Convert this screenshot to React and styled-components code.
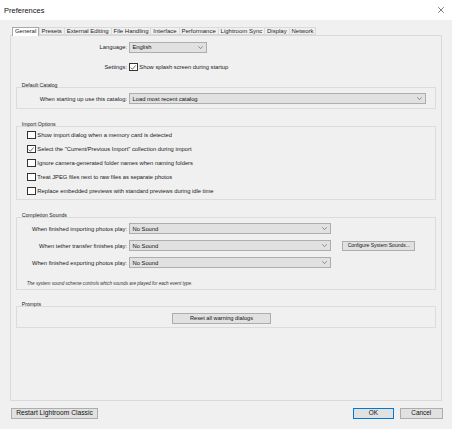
import React from 'react';
import styled, { createGlobalStyle } from 'styled-components';

const GlobalStyle = createGlobalStyle`
  html, body {
    margin: 0;
    padding: 0;
    background: #f0f0f0;
  }
  body {
    font-family: "Liberation Sans", Arial, sans-serif;
    color: #1a1a1a;
  }
`;

const Window = styled.div`
  width: 452px;
  height: 429px;
  background: #f0f0f0;
  display: flex;
  flex-direction: column;
  overflow: hidden;
`;

const TitleBar = styled.div`
  height: 20px;
  flex: none;
  background: #fff;
  display: flex;
  align-items: center;
  justify-content: space-between;
  padding: 0 8px 0 4px;
`;

const Title = styled.span`
  font-size: 7.5px;
  color: #111;
`;

const CloseIcon = styled.svg`
  width: 6px;
  height: 6px;
  display: block;
`;

const Content = styled.div`
  padding: 0 10px;
`;

const TabStrip = styled.div`
  display: flex;
  padding-left: 2px;
  margin-top: 6.5px;
  height: 8.5px;
  position: relative;
  z-index: 1;
`;

const Tab = styled.div`
  height: ${p => (p.$active ? 9.5 : 8.5)}px;
  box-sizing: border-box;
  padding: 0 1.9px;
  font-size: 6px;
  line-height: 7px;
  color: #1e1e1e;
  white-space: nowrap;
  background: ${p => (p.$active ? '#fff' : '#f0f0f0')};
  border: 1px solid ${p => (p.$active ? '#a9a9a9' : '#dadada')};
  border-bottom: ${p => (p.$active ? 'none' : '1px solid #dadada')};
  margin-right: ${p => (p.$active ? 0.5 : 0)}px;
  margin-left: -1px;
  &:first-child {
    margin-left: 0;
  }
`;

const Panel = styled.div`
  height: 366px;
  box-sizing: border-box;
  border: 1px solid #d9d9d9;
  display: flex;
  flex-direction: column;
  font-size: 5.8px;
`;

const FieldRow = styled.div`
  display: flex;
  align-items: center;
  flex: none;
  height: ${p => p.$h || 11}px;
  margin-top: ${p => p.$mt || 0}px;
`;

const FieldLabel = styled.div`
  width: ${p => p.$w}px;
  flex: none;
  box-sizing: border-box;
  padding-right: 2px;
  text-align: right;
  white-space: nowrap;
`;

const SelectBox = styled.div`
  width: ${p => p.$w}px;
  height: 11px;
  flex: none;
  box-sizing: border-box;
  border: 1px solid #adadad;
  background: #e1e1e1;
  display: flex;
  align-items: center;
  justify-content: space-between;
  padding: 0 3px 0 2.5px;
  color: #111;
`;

const Chevron = styled.svg`
  width: 5px;
  height: 3px;
  display: block;
`;

const CheckBox = styled.span`
  width: 8.5px;
  height: 8.5px;
  flex: none;
  box-sizing: border-box;
  border: 1px solid #333;
  background: #fff;
  display: flex;
  align-items: center;
  justify-content: center;
`;

const CheckText = styled.span`
  margin-left: 1.8px;
  white-space: nowrap;
`;

const Group = styled.section`
  margin: ${p => p.$mt}px 5px 0;
  flex: none;
`;

const GroupTitle = styled.div`
  font-size: 5.2px;
  line-height: 6px;
  height: 6px;
  padding-left: 5.7px;
  margin-bottom: -1px;
  color: #222;
  position: relative;
`;

const GroupBox = styled.div`
  border: 1px solid #dcdcdc;
  padding: ${p => p.$pad};
  display: flex;
  flex-direction: column;
`;

const OptionRow = styled.div`
  height: 14px;
  display: flex;
  align-items: center;
  padding-left: 10px;
`;

const Note = styled.div`
  margin-top: 8.5px;
  height: 7px;
  line-height: 7px;
  padding-left: 9.7px;
  font-size: 4.6px;
  font-style: italic;
  color: #333;
  white-space: nowrap;
`;

const Button = styled.button`
  width: ${p => p.$w}px;
  height: ${p => p.$h || 11.5}px;
  margin-left: ${p => p.$ml || 0}px;
  flex: none;
  box-sizing: border-box;
  padding: 0;
  border: 1px solid ${p => (p.$primary ? '#0078d7' : '#adadad')};
  background: #e1e1e1;
  font-family: inherit;
  font-size: ${p => p.$fs || 5.8}px;
  color: #111;
  line-height: 1;
  white-space: nowrap;
`;

const Footer = styled.div`
  display: flex;
  align-items: center;
  margin-top: 6.7px;
  padding: 0 9.5px 0 10.7px;
`;

const FooterRight = styled.div`
  display: flex;
  gap: 6px;
  margin-left: auto;
`;

const tabs = ['General', 'Presets', 'External Editing', 'File Handling', 'Interface', 'Performance', 'Lightroom Sync', 'Display', 'Network'];

const importOptions = [
  { text: 'Show import dialog when a memory card is detected', checked: false },
  { text: 'Select the "Current/Previous Import" collection during import', checked: true },
  { text: 'Ignore camera-generated folder names when naming folders', checked: false },
  { text: 'Treat JPEG files next to raw files as separate photos', checked: false },
  { text: 'Replace embedded previews with standard previews during idle time', checked: false },
];

const sounds = [
  'When finished importing photos play:',
  'When tether transfer finishes play:',
  'When finished exporting photos play:',
];

function Select({ width, value }) {
  return (
    <SelectBox $w={width}>
      <span>{value}</span>
      <Chevron viewBox="0 0 5 3">
        <polyline points="0.3,0.3 2.5,2.6 4.7,0.3" fill="none" stroke="#555" strokeWidth="0.6" />
      </Chevron>
    </SelectBox>
  );
}

function Check({ checked }) {
  return (
    <CheckBox>
      {checked && (
        <svg width="7" height="7" viewBox="0 0 7 7">
          <polyline points="0.8,3.6 2.6,5.4 6.2,1.2" fill="none" stroke="#222" strokeWidth="0.7" />
        </svg>
      )}
    </CheckBox>
  );
}

export default function App() {
  return (
    <Window>
      <GlobalStyle />
      <TitleBar>
        <Title>Preferences</Title>
        <CloseIcon viewBox="0 0 6 6">
          <path d="M0.2 0.2 L5.8 5.8 M5.8 0.2 L0.2 5.8" stroke="#222" strokeWidth="0.6" />
        </CloseIcon>
      </TitleBar>

      <Content>
        <TabStrip>
          {tabs.map((t, i) => (
            <Tab key={t} $active={i === 0}>{t}</Tab>
          ))}
        </TabStrip>

        <Panel>
          <FieldRow $mt={5.5}>
            <FieldLabel $w={118}>Language:</FieldLabel>
            <Select width={78} value="English" />
          </FieldRow>
          <FieldRow $mt={9}>
            <FieldLabel $w={118}>Settings:</FieldLabel>
            <Check checked />
            <CheckText>Show splash screen during startup</CheckText>
          </FieldRow>

          <Group $mt={9.5}>
            <GroupTitle>Default Catalog</GroupTitle>
            <GroupBox $pad="5px 0 4px">
              <FieldRow>
                <FieldLabel $w={112}>When starting up use this catalog:</FieldLabel>
                <Select width={297} value="Load most recent catalog" />
              </FieldRow>
            </GroupBox>
          </Group>

          <Group $mt={12}>
            <GroupTitle>Import Options</GroupTitle>
            <GroupBox $pad="1px 0">
              {importOptions.map(o => (
                <OptionRow key={o.text}>
                  <Check checked={o.checked} />
                  <CheckText>{o.text}</CheckText>
                </OptionRow>
              ))}
            </GroupBox>
          </Group>

          <Group $mt={12}>
            <GroupTitle>Completion Sounds</GroupTitle>
            <GroupBox $pad="2px 0 2.5px">
              {sounds.map((s, i) => (
                <FieldRow key={s} $h={17}>
                  <FieldLabel $w={112}>{s}</FieldLabel>
                  <Select width={202} value="No Sound" />
                  {i === 1 && <Button $w={73} $h={10} $ml={11.3} $fs={5}>Configure System Sounds...</Button>}
                </FieldRow>
              ))}
              <Note>The system sound scheme controls which sounds are played for each event type.</Note>
            </GroupBox>
          </Group>

          <Group $mt={11}>
            <GroupTitle>Prompts</GroupTitle>
            <GroupBox $pad="6px 0 3px">
              <FieldRow>
                <Button $w={99} $h={11} $ml={155} $fs={5.7}>Reset all warning dialogs</Button>
              </FieldRow>
            </GroupBox>
          </Group>
        </Panel>
      </Content>

      <Footer>
        <Button $w={87.6} $fs={6.7}>Restart Lightroom Classic</Button>
        <FooterRight>
          <Button $w={41.6} $fs={6.4} $primary>OK</Button>
          <Button $w={42.4} $fs={6.4}>Cancel</Button>
        </FooterRight>
      </Footer>
    </Window>
  );
}
